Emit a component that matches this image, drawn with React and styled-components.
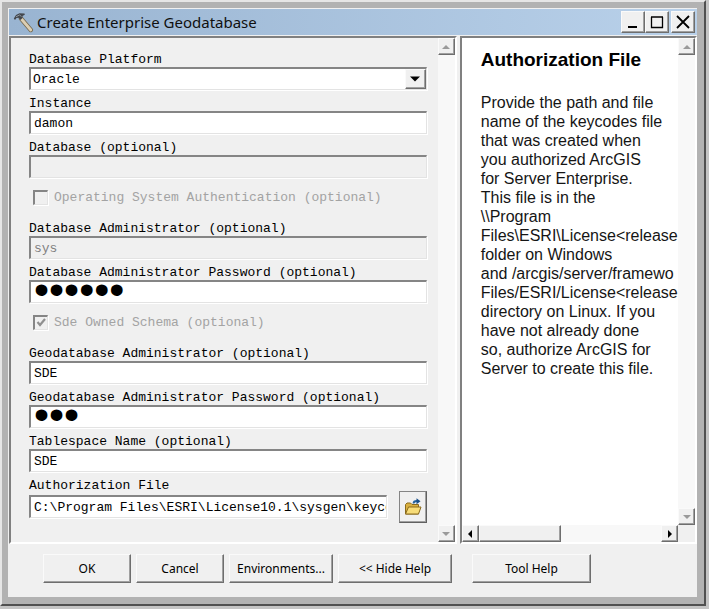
import React, { useState } from 'react'
import styled, { createGlobalStyle, css } from 'styled-components'

const GlobalStyle = createGlobalStyle`

    * {
        box-sizing: border-box;
    }

    body {
        margin: 0;
        background: #d6d6d6;
        font-family: "Noto Sans", "Open Sans", sans-serif;
        font-size: 12px;
        color: #000;
    }
`

const MONO = '"Liberation Mono", "DejaVu Sans Mono", monospace';

const raised = css`
    border: 1px solid;
    border-color: #fafafa #6e6e6e #6e6e6e #fafafa;
    box-shadow: inset -1px -1px 0 #a0a0a0;
    background: #f0f0f0;
`

const sunken = css`
    border-style: solid;
    border-width: 2px 1px 1px 2px;
    border-color: #858585 #e3e3e3 #e3e3e3 #858585;
    box-shadow: 1px 1px 0 #fff;
`

const Frame = styled.div`
    min-height: 100vh;
    display: flex;
    padding: 0 3px 3px 0;
    background: #c4c4c4;
`

const Window = styled.main`
    flex: 1;
    min-width: 0;
    display: flex;
    flex-direction: column;
    border: 2px solid;
    border-color: #e6e6e6 #505050 #505050 #e6e6e6;
    background: #b2b2b2;
    padding: 6px 7px 7px 6px;
`

const Body = styled.div`
    flex: 1;
    display: flex;
    flex-direction: column;
    background: #f0f0f0;
    padding: 1px 0 0 1px;
`

const TitleBar = styled.header`
    display: flex;
    align-items: center;
    height: 26px;
    padding: 0 2px 0 4px;
    background: linear-gradient(90deg, #99b4d1, #b9d1ea);

    > h1 {
        flex: 1;
        margin: 0 0 0 3px;
        font-size: 15px;
        font-weight: 400;
        line-height: 24px;
        color: #101010;
    }
`

const WindowButton = styled.button`
    ${raised}
    width: 24px;
    height: 22px;
    padding: 0;
    margin-left: ${({ $apart }) => ($apart ? '2px' : '0')};
    display: grid;
    place-items: center;
`

const Panels = styled.div`
    flex: 1;
    display: flex;
    gap: 3px;
    margin-top: 1px;
`

const Panel = styled.section`
    display: grid;
    grid-template-columns: minmax(0, 1fr) 17px;
    grid-template-rows: minmax(0, 1fr) auto;
    border: 2px solid;
    border-color: #808080 #fff #fff #808080;
    min-width: 0;
`

const FormPanel = styled(Panel)`
    flex: 449;
`

const HelpPanel = styled(Panel)`
    flex: 236;
    background: #fff;
`

const Form = styled.form`
    padding: 9px 11px 18px 18px;
    font-family: ${MONO};
    font-size: 13px;
`

const Field = styled.div`
    display: flex;
    flex-direction: column;

    > label {
        padding-top: 5px;
        line-height: 15px;
    }
`

const TextInput = styled.input`
    ${sunken}
    width: 100%;
    height: 23px;
    margin-bottom: 1px;
    padding: 0 0 0 3px;
    background: #fff;
    font-family: ${MONO};
    font-size: 13px;
    color: #000;
    outline: none;

    &:disabled {
        background: #f0f0f0;
        color: #808080;
    }

    &[type='password'] {
        padding-bottom: 5px;
        font-family: "Liberation Sans", sans-serif;
        font-size: 43px;
    }
`

const SelectBox = styled.div`
    ${sunken}
    display: grid;
    grid-template-columns: minmax(0, 1fr) 21px;
    height: 23px;
    margin-bottom: 1px;
    background: #fff;

    > select {
        grid-area: 1 / 1 / 2 / 3;
        appearance: none;
        border: 0;
        padding: 0 24px 0 2px;
        background: transparent;
        font-family: ${MONO};
        font-size: 13px;
        color: #000;
        outline: none;
    }
`

const DropArrow = styled.span`
    ${raised}
    grid-area: 1 / 2 / 2 / 3;
    display: grid;
    place-items: center;
    pointer-events: none;
`

const CheckRow = styled.div`
    display: flex;
    align-items: center;
    gap: 6px;
    height: 37px;
    padding-left: 4px;
    color: #a3a3a3;
`

const Check = styled.input`
    ${sunken}
    appearance: none;
    flex: none;
    width: 15px;
    height: 15px;
    margin: 0;
    background: #f0f0f0;

    &:checked {
        background: url("data:image/svg+xml,%3Csvg xmlns='http://www.w3.org/2000/svg' viewBox='0 0 12 12'%3E%3Cpath d='M2.5 5l2.5 3 5-6' fill='none' stroke='%23909090' stroke-width='2.2'/%3E%3C/svg%3E") center / 12px no-repeat #f0f0f0;
    }
`

const FileRow = styled.div`
    display: flex;
    align-items: center;
    gap: 12px;
    margin-top: -2px;
`

const BrowseButton = styled.button`
    ${raised}
    flex: none;
    width: 28px;
    height: 32px;
    padding: 0;
    border-color: #858585 #606060 #606060 #858585;
    display: grid;
    place-items: center;
`

const Track = styled.div`
    display: flex;
    flex-direction: ${({ $horizontal }) => ($horizontal ? 'row' : 'column')};
    justify-content: space-between;
    background: #f8f8f8;
`

const ScrollButton = styled.button`
    ${raised}
    flex: none;
    width: 17px;
    height: 17px;
    padding: 0;
    display: grid;
    place-items: center;
`

const Thumb = styled.div`
    ${raised}
    width: 38%;
    margin-right: auto;
`

const Corner = styled.div`
    background: #f0f0f0;
`

const HelpText = styled.article`
    overflow: hidden;
    padding: 10px 0 0 19px;
    font-family: "Liberation Sans", sans-serif;
    font-size: 16px;
    line-height: 19px;

    > h2 {
        margin: 0 0 21px;
        font-size: 19px;
        line-height: 24px;
    }

    > p {
        margin: 0;
        white-space: pre;
        color: #151515;
    }
`

const Footer = styled.footer`
    display: flex;
    gap: 5px;
    padding: 10px 34px 14px;
`

const PushButton = styled.button`
    ${raised}
    width: ${({ $width }) => $width || '88px'};
    height: 29px;
    padding: 0;
    margin-left: ${({ $apart }) => ($apart ? '15px' : '0')};
    font-family: inherit;
    font-size: 12px;
    color: #000;
`

const arrows = {
    up: 'M0 6L4 2L8 6Z',
    down: 'M0 2L4 6L8 2Z',
    left: 'M6 0L2 4L6 8Z',
    right: 'M2 0L6 4L2 8Z',
}

const Arrow = ({ to, color = '#000', size = 8 }) => (
    <svg width={size} height={size} viewBox="0 0 8 8" aria-hidden="true">
        <path d={arrows[to]} fill={color} />
    </svg>
)

const HammerIcon = () => (
    <svg width="21" height="21" viewBox="0 0 21 21" aria-hidden="true">
        <path d="M8 6.500L17.800 18" stroke="#75694f" strokeWidth="4.400" strokeLinecap="round" />
        <path d="M8 6.500L17.800 18" stroke="#dccfb4" strokeWidth="2.800" strokeLinecap="round" />
        <path d="M0.800 6.500L3 3L6.500 1.300L11.500 1.500L11.800 2.800L9.500 4L9.500 6L7.500 8L5.500 5.800L3.500 6L2 8Z" fill="#43474d" />
        <path d="M3 4.800L6.500 3L8.500 4.500" fill="none" stroke="#8f979f" />
    </svg>
)

const FolderIcon = () => (
    <svg width="18" height="18" viewBox="0 0 18 18" aria-hidden="true">
        <path d="M1.500 16V6.500L3 5H6.500L8 6.500H14.500V16Z" fill="#d9b040" stroke="#8a6a1c" />
        <path d="M1.500 16L4.500 9H17L14.500 16Z" fill="#f7dc78" stroke="#8a6a1c" />
        <path d="M9.500 5.500C9.500 3.500 11 3 13 3" fill="none" stroke="#24629c" strokeWidth="1.800" />
        <path d="M12.500 0.300L16.500 3.200L12.500 6.200Z" fill="#174f8a" />
    </svg>
)

const VerticalScroll = () => (
    <Track>
        <ScrollButton type="button" aria-label="Scroll up"><Arrow to="up" color="#9a9a9a" /></ScrollButton>
        <ScrollButton type="button" aria-label="Scroll down"><Arrow to="down" color="#9a9a9a" /></ScrollButton>
    </Track>
)

const TextField = ({ id, label, ...rest }) => (
    <Field>
        <label htmlFor={id}>{label}</label>
        <TextInput id={id} {...rest} />
    </Field>
)

const helpBody = `Provide the path and file
name of the keycodes file
that was created when
you authorized ArcGIS
for Server Enterprise.
This file is in the
\\\\Program
Files\\ESRI\\License<release
folder on Windows
and /arcgis/server/framewo
Files/ESRI/License<release
directory on Linux. If you
have not already done
so, authorize ArcGIS for
Server to create this file.`

const App = () => {

    const [values, setValues] = useState({
        instance: 'damon',
        database: '',
        admin: 'sys',
        adminPassword: 'secret',
        gdbAdmin: 'SDE',
        gdbPassword: 'sde',
        tablespace: 'SDE',
        authFile: 'C:\\Program Files\\ESRI\\License10.1\\sysgen\\keycodes',
    });

    const bind = name => ({
        id: name,
        value: values[name],
        onChange: e => setValues({ ...values, [name]: e.target.value }),
    })

    return (
        <Frame>
            <GlobalStyle />
            <Window>
                <Body>
                    <TitleBar>
                        <HammerIcon />
                        <h1>Create Enterprise Geodatabase</h1>
                        <WindowButton type="button" aria-label="Minimize">
                            <svg width="14" height="14" viewBox="0 0 14 14"><path d="M2 12H11" stroke="#000" strokeWidth="2" /></svg>
                        </WindowButton>
                        <WindowButton type="button" aria-label="Maximize">
                            <svg width="14" height="14" viewBox="0 0 14 14"><path d="M1.500 2V12.500H12.500V2M1 2H13" fill="none" stroke="#000" strokeWidth="1.300" /></svg>
                        </WindowButton>
                        <WindowButton type="button" aria-label="Close" $apart>
                            <svg width="14" height="14" viewBox="0 0 14 14"><path d="M1 1L13 13M13 1L1 13" stroke="#000" strokeWidth="1.800" /></svg>
                        </WindowButton>
                    </TitleBar>
                    <Panels>
                        <FormPanel>
                            <Form onSubmit={e => e.preventDefault()}>
                                <Field>
                                    <label htmlFor="platform">Database Platform</label>
                                    <SelectBox>
                                        <select id="platform" defaultValue="Oracle">
                                            <option>Oracle</option>
                                        </select>
                                        <DropArrow><Arrow to="down" size={10} /></DropArrow>
                                    </SelectBox>
                                </Field>
                                <TextField label="Instance" {...bind('instance')} />
                                <TextField label="Database (optional)" disabled {...bind('database')} />
                                <CheckRow>
                                    <Check type="checkbox" id="osAuth" disabled />
                                    <label htmlFor="osAuth">Operating System Authentication (optional)</label>
                                </CheckRow>
                                <TextField label="Database Administrator (optional)" disabled {...bind('admin')} />
                                <TextField label="Database Administrator Password (optional)" type="password" {...bind('adminPassword')} />
                                <CheckRow>
                                    <Check type="checkbox" id="sdeSchema" defaultChecked disabled />
                                    <label htmlFor="sdeSchema">Sde Owned Schema (optional)</label>
                                </CheckRow>
                                <TextField label="Geodatabase Administrator (optional)" {...bind('gdbAdmin')} />
                                <TextField label="Geodatabase Administrator Password (optional)" type="password" {...bind('gdbPassword')} />
                                <TextField label="Tablespace Name (optional)" {...bind('tablespace')} />
                                <Field>
                                    <label htmlFor="authFile">Authorization File</label>
                                    <FileRow>
                                        <TextInput {...bind('authFile')} />
                                        <BrowseButton type="button" aria-label="Browse"><FolderIcon /></BrowseButton>
                                    </FileRow>
                                </Field>
                            </Form>
                            <VerticalScroll />
                        </FormPanel>
                        <HelpPanel>
                            <HelpText>
                                <h2>Authorization File</h2>
                                <p>{helpBody}</p>
                            </HelpText>
                            <VerticalScroll />
                            <Track $horizontal>
                                <ScrollButton type="button" aria-label="Scroll left"><Arrow to="left" /></ScrollButton>
                                <Thumb />
                                <ScrollButton type="button" aria-label="Scroll right"><Arrow to="right" /></ScrollButton>
                            </Track>
                            <Corner />
                        </HelpPanel>
                    </Panels>
                    <Footer>
                        <PushButton type="button">OK</PushButton>
                        <PushButton type="button">Cancel</PushButton>
                        <PushButton type="button" $width="104px">Environments...</PushButton>
                        <PushButton type="button" $width="114px">&lt;&lt; Hide Help</PushButton>
                        <PushButton type="button" $width="119px" $apart>Tool Help</PushButton>
                    </Footer>
                </Body>
            </Window>
        </Frame>
    )
}

export default App;
